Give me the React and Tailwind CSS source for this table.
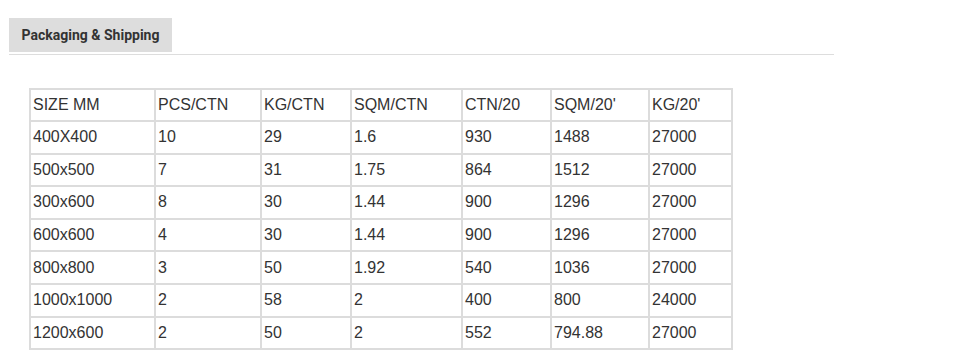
import React from 'react';

const headers = ['SIZE MM', 'PCS/CTN', 'KG/CTN', 'SQM/CTN', 'CTN/20', "SQM/20'", "KG/20'"];
const widths = ['w-[125px]', 'w-[106px]', 'w-[90px]', 'w-[111px]', 'w-[89px]', 'w-[98px]', 'w-[83px]'];

const rows = [
  ['400X400', '10', '29', '1.6', '930', '1488', '27000'],
  ['500x500', '7', '31', '1.75', '864', '1512', '27000'],
  ['300x600', '8', '30', '1.44', '900', '1296', '27000'],
  ['600x600', '4', '30', '1.44', '900', '1296', '27000'],
  ['800x800', '3', '50', '1.92', '540', '1036', '27000'],
  ['1000x1000', '2', '58', '2', '400', '800', '24000'],
  ['1200x600', '2', '50', '2', '552', '794.88', '27000'],
];

export default function App() {
  return (
    <div className="min-h-[359px] bg-white font-['Liberation_Sans',Arial,sans-serif] text-[#333]">
      <div className="pl-[9px] pt-[18px]">
        <div className="w-[825px] border-b border-[#dddddd] pb-[2px]">
          <div className="flex h-[34px] w-[163px] items-center justify-center bg-[#dddddd] font-['Roboto',Arial,sans-serif] text-[14px] font-bold text-[#333]">
            Packaging &amp; Shipping
          </div>
        </div>
      </div>

      <div className="pl-[29px] pt-[33px]">
        <table className="w-[702px] table-fixed border-collapse border-2 border-[#dcdcdc] text-[16px] leading-[18px]">
          <thead>
            <tr className="h-[32px]">
              {headers.map((h, i) => (
                <td key={h} className={`${widths[i]} border-2 border-[#dcdcdc] px-[2px] text-left font-normal`}>
                  {h}
                </td>
              ))}
            </tr>
          </thead>
          <tbody>
            {rows.map((r) => (
              <tr key={r[0]} className="h-[32.6px]">
                {r.map((c, i) => (
                  <td key={i} className="border-2 border-[#dcdcdc] px-[2px]">
                    {c}
                  </td>
                ))}
              </tr>
            ))}
          </tbody>
        </table>
      </div>
    </div>
  );
}
